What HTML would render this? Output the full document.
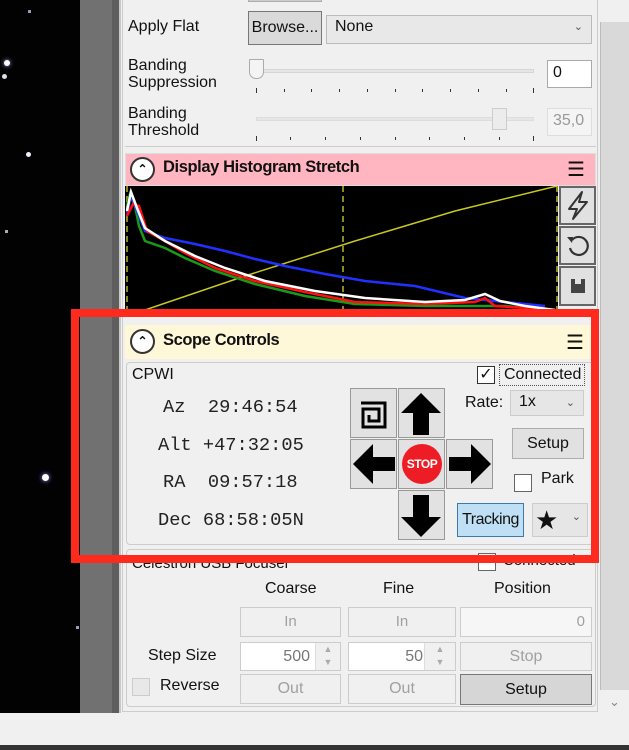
<!DOCTYPE html>
<html><head><meta charset="utf-8"><style>
*{box-sizing:border-box;margin:0;padding:0}
body{width:629px;height:750px;overflow:hidden;background:#f0f0f0;position:relative;font-family:"Liberation Sans",sans-serif;font-size:15px;color:#111}
.a{position:absolute}
.btn{position:absolute;border:1px solid #adadad;background:#e1e1e1;text-align:center}
.dis{position:absolute;border:1px solid #ccc;background:#f0f0f0;color:#a0a0a0;text-align:center;font-size:15px}
.mono{font-family:"Liberation Mono",monospace;font-size:18.7px;color:#222;white-space:pre}
.cell{position:absolute;width:47px;height:50px;background:#e2e2e2;border:1px solid #999}
.chk{position:absolute;width:18px;height:18px;border:1px solid #333;background:#fff}
.tick{position:absolute;width:1px;height:5px;background:#333}
</style></head><body>
<div class="a" style="left:0;top:0;width:80px;height:713px;background:#030203"></div>
<div class="a" style="left:4px;top:60px;width:6px;height:6px;border-radius:50%;background:#fff;box-shadow:0 0 4px #aaf"></div>
<div class="a" style="left:2px;top:74px;width:5px;height:5px;border-radius:50%;background:#dde"></div>
<div class="a" style="left:26px;top:152px;width:5px;height:5px;border-radius:50%;background:#eef"></div>
<div class="a" style="left:42px;top:474px;width:7px;height:7px;border-radius:50%;background:#fff;box-shadow:0 0 5px #99f"></div>
<div class="a" style="left:28px;top:10px;width:3px;height:3px;background:#99b"></div>
<div class="a" style="left:5px;top:230px;width:3px;height:3px;background:#aab"></div>
<div class="a" style="left:76px;top:626px;width:3px;height:3px;background:#99c"></div>
<div class="a" style="left:80px;top:0;width:32px;height:713px;background:#717171"></div>
<div class="a" style="left:112px;top:0;width:7px;height:713px;background:#5e5e5e"></div>
<div class="a" style="left:119px;top:0;width:2px;height:713px;background:#c8c8c8"></div>
<div class="a" style="left:600px;top:0;width:29px;height:713px;background:#d9d9d9;border-left:1px solid #bbb"></div>
<div class="a" style="left:600px;top:0;width:29px;height:22px;background:#f0f0f0"></div>
<div class="a" style="left:600px;top:690px;width:29px;height:23px;background:#f0f0f0;color:#888;text-align:center;font-size:13px;line-height:23px">&#8964;</div>
<div class="a" style="left:0;top:745px;width:629px;height:5px;background:#333"></div>
<div class="a" style="left:122px;top:0;width:476px;height:712px;border:1px solid #ccc;border-top:none"></div>
<div class="btn" style="left:248px;top:-4px;width:74px;height:6px;background:#ccc"></div>
<div class="a" style="left:128px;top:18px;font-size:16px">Apply Flat</div>
<div class="btn" style="left:248px;top:11px;width:74px;height:34px;line-height:32px;background:#dadada;border-color:#777;font-size:16px">Browse...</div>
<div class="a" style="left:326px;top:15px;width:266px;height:29px;border:1px solid #bbb;background:#e8e8e8;padding:2px 8px;font-size:16px">None<span style="position:absolute;right:8px;top:4px;font-size:11px;color:#555">&#8964;</span></div>
<div class="a" style="left:128px;top:57px;line-height:17px;font-size:16px">Banding<br>Suppression</div>
<div class="a" style="left:258px;top:69px;width:276px;height:4px;background:#e6e6e6;border:1px solid #d6d6d6"></div>
<div class="a" style="left:249px;top:59px;width:15px;height:20px;background:#f4f4f4;border:1px solid #aaa;border-radius:1px 1px 7px 7px"></div>
<div class="a" style="left:547px;top:60px;width:45px;height:28px;background:#fff;border:1px solid #aaa;padding:3px 5px;font-size:16px">0</div>
<div class="a" style="left:128px;top:105px;line-height:17px;font-size:16px">Banding<br>Threshold</div>
<div class="a" style="left:256px;top:117px;width:278px;height:4px;background:#e6e6e6;border:1px solid #ddd"></div>
<div class="a" style="left:492px;top:108px;width:15px;height:22px;background:#ececec;border:1px solid #ccc"></div>
<div class="a" style="left:547px;top:108px;width:45px;height:28px;background:#f4f4f4;border:1px solid #ddd;padding:3px 5px;color:#999;font-size:16px">35,0</div>
<div class="tick" style="left:256px;top:88px"></div><div class="tick" style="left:284px;top:89px;height:3px"></div><div class="tick" style="left:311px;top:89px;height:3px"></div><div class="tick" style="left:339px;top:89px;height:3px"></div><div class="tick" style="left:367px;top:89px;height:3px"></div><div class="tick" style="left:395px;top:89px;height:3px"></div><div class="tick" style="left:422px;top:89px;height:3px"></div><div class="tick" style="left:450px;top:89px;height:3px"></div><div class="tick" style="left:478px;top:89px;height:3px"></div><div class="tick" style="left:506px;top:89px;height:3px"></div><div class="tick" style="left:533px;top:88px"></div>
<div class="tick" style="left:256px;top:136px"></div><div class="tick" style="left:290px;top:137px;height:3px"></div><div class="tick" style="left:325px;top:137px;height:3px"></div><div class="tick" style="left:360px;top:137px;height:3px"></div><div class="tick" style="left:395px;top:137px;height:3px"></div><div class="tick" style="left:429px;top:137px;height:3px"></div><div class="tick" style="left:464px;top:137px;height:3px"></div><div class="tick" style="left:499px;top:137px;height:3px"></div><div class="tick" style="left:533px;top:136px"></div>
<div class="a" style="left:125px;top:146px;width:471px;height:1px;background:#ccc"></div>
<div class="a" style="left:125px;top:153px;width:471px;height:33px;background:#ffb6c1;border:1px solid #ddd"></div>
<div class="a" style="left:130px;top:157px;width:25px;height:25px;border:2px solid #333;border-radius:50%;background:#fff;font-size:12px;text-align:center;line-height:20px;font-weight:bold">&#8963;</div>
<div class="a" style="left:163px;top:158px;font-weight:bold;font-size:16.5px;letter-spacing:-0.4px">Display Histogram Stretch</div>
<div class="a" style="left:567px;top:160px;font-size:20px;line-height:20px">&#9776;</div>
<svg class="a" style="left:125px;top:186px" width="433" height="124">
<rect width="433" height="124" fill="#000"/>
<g stroke="#8a8a20" stroke-width="2" stroke-dasharray="6,4"><line x1="2" y1="0" x2="2" y2="124"/><line x1="218" y1="0" x2="218" y2="124"/><line x1="432" y1="0" x2="432" y2="124"/></g>
<polyline fill="none" stroke="#c8c820" stroke-width="1.5" points="20,124 120,90 230,55 330,25 432,0"/>
<polyline fill="none" stroke="#1a9a1a" stroke-width="2.5" points="2,20 5,8 10,20 14,40 20,55 40,62 60,72 90,85 130,98 180,110 230,118 300,120 380,120 420,124"/>
<polyline fill="none" stroke="#2030ff" stroke-width="2.5" points="2,30 6,8 12,25 20,45 40,52 70,58 100,65 130,73 160,80 200,88 240,95 290,100 340,112 380,116 420,120"/>
<polyline fill="none" stroke="#ff1010" stroke-width="2.5" points="2,30 8,18 14,20 22,45 40,55 60,67 90,82 130,95 180,106 230,116 300,118 350,116 360,112 370,120 430,124"/>
<polyline fill="none" stroke="#fff" stroke-width="2.5" points="2,25 6,6 12,22 20,42 40,55 70,70 100,82 140,95 190,105 240,112 300,116 340,114 360,108 375,115 400,120 430,124"/>
</svg>
<div class="btn" style="left:559px;top:186px;width:37px;height:39px;border:2px solid #666"><svg width="33" height="35"><path d="M21 4L8 21H16L12 31L26 14H18L21 4Z" fill="none" stroke="#333" stroke-width="2" stroke-linejoin="round"/></svg></div>
<div class="btn" style="left:559px;top:226px;width:37px;height:39px;border:2px solid #666"><svg width="33" height="35"><path d="M11 12A9 9 0 1 1 9 20" fill="none" stroke="#333" stroke-width="2.2"/><path d="M6 9L12 9L11 15Z" fill="#333"/></svg></div>
<div class="btn" style="left:559px;top:266px;width:37px;height:40px;border:2px solid #666"><div style="position:absolute;left:10px;top:11px;width:14px;height:14px;background:#444"></div><div style="position:absolute;left:14px;top:11px;width:6px;height:5px;background:#e1e1e1"></div></div>
<div class="a" style="left:125px;top:325px;width:471px;height:34px;background:#fff8d8"></div>
<div class="a" style="left:130px;top:329px;width:25px;height:25px;border:2px solid #333;border-radius:50%;background:#fff;font-size:12px;text-align:center;line-height:20px;font-weight:bold">&#8963;</div>
<div class="a" style="left:163px;top:331px;font-weight:bold;font-size:16.5px;letter-spacing:-0.4px">Scope Controls</div>
<div class="a" style="left:566px;top:333px;font-size:20px;line-height:20px">&#9776;</div>
<div class="a" style="left:126px;top:362px;width:470px;height:183px;border:1px solid #ccc;border-radius:4px"></div>
<div class="a" style="left:132px;top:366px;font-size:16px">CPWI</div>
<div class="chk" style="left:477px;top:366px;font-size:16px;line-height:15px;text-align:center">&#10003;</div>
<div class="a" style="left:499px;top:364px;width:86px;height:22px;border:1px dotted #555;padding:1px 4px;font-size:16px">Connected</div>
<div class="a mono" style="left:163px;top:396px">Az  29:46:54</div>
<div class="a mono" style="left:158px;top:434px">Alt +47:32:05</div>
<div class="a mono" style="left:163px;top:471px">RA  09:57:18</div>
<div class="a mono" style="left:158px;top:509px">Dec 68:58:05N</div>
<div class="cell" style="left:350px;top:388px"><svg width="45" height="48"><path d="M10 14H34V38H12V20H28V32H18V26" fill="none" stroke="#000" stroke-width="3"/></svg></div>
<div class="cell" style="left:398px;top:388px"><svg width="45" height="48"><path d="M22 4L42 24H30V46H14V24H2Z" fill="#000"/></svg></div>
<div class="cell" style="left:350px;top:439px"><svg width="45" height="48"><path d="M2 24L22 4V17H44V31H22V44Z" fill="#000"/></svg></div>
<div class="cell" style="left:398px;top:439px"><div style="position:absolute;left:3px;top:4px;width:40px;height:40px;border-radius:50%;background:#ee1c25;color:#fff;font-weight:bold;font-size:12px;line-height:40px;text-align:center;letter-spacing:-0.5px">STOP</div></div>
<div class="cell" style="left:446px;top:439px"><svg width="45" height="48"><path d="M44 24L24 4V17H2V31H24V44Z" fill="#000"/></svg></div>
<div class="cell" style="left:398px;top:490px"><svg width="45" height="48"><path d="M22 46L42 26H30V4H14V26H2Z" fill="#000"/></svg></div>
<div class="a" style="left:465px;top:394px;font-size:16px">Rate:</div>
<div class="a" style="left:510px;top:390px;width:74px;height:26px;border:1px solid #ccc;background:#e6e6e6;padding:2px 8px;font-size:16px">1x<span style="position:absolute;right:8px;top:5px;font-size:11px;color:#555">&#8964;</span></div>
<div class="btn" style="left:512px;top:428px;width:72px;height:31px;line-height:29px;font-size:16px">Setup</div>
<div class="chk" style="left:514px;top:474px;border-color:#666"></div>
<div class="a" style="left:541px;top:470px;font-size:16px">Park</div>
<div class="btn" style="left:457px;top:503px;width:67px;height:34px;background:#bfe0f4;border-color:#3a7ab0;line-height:32px;letter-spacing:-0.5px;font-size:16px">Tracking</div>
<div class="btn" style="left:532px;top:503px;width:56px;height:34px;background:#e6e6e6;border-color:#ccc"><span style="position:absolute;left:2px;top:2px;font-size:26px;line-height:28px">&#9733;</span><span style="position:absolute;right:6px;top:6px;font-size:11px;color:#555">&#8964;</span></div>
<div class="a" style="left:126px;top:549px;width:470px;height:158px;border:1px solid #ccc;border-radius:4px"></div>
<div class="a" style="left:132px;top:555px">Celestron USB Focuser</div>
<div class="chk" style="left:478px;top:553px;border-color:#666"></div>
<div class="a" style="left:503px;top:552px">Connected</div>
<div class="a" style="left:265px;top:580px;font-size:16px">Coarse</div>
<div class="a" style="left:383px;top:580px;font-size:16px">Fine</div>
<div class="a" style="left:494px;top:580px;font-size:16px">Position</div>
<div class="dis" style="left:240px;top:607px;width:101px;height:30px;line-height:28px">In</div>
<div class="dis" style="left:348px;top:607px;width:108px;height:30px;line-height:28px">In</div>
<div class="dis" style="left:460px;top:607px;width:132px;height:30px;line-height:28px;text-align:right;padding-right:6px;background:#f6f6f6">0</div>
<div class="a" style="left:148px;top:647px;font-size:16px">Step Size</div>
<div class="a" style="left:240px;top:642px;width:101px;height:29px;border:1px solid #ccc;background:#fff;text-align:right;padding:5px 30px 0 0;color:#777;font-size:16px">500</div>
<div class="a" style="left:315px;top:643px;width:25px;height:27px;background:#f0f0f0;border-left:1px solid #ddd;color:#aaa;font-size:9px;text-align:center;line-height:13px">&#9650;<br>&#9660;</div>
<div class="a" style="left:348px;top:642px;width:108px;height:29px;border:1px solid #ccc;background:#fff;text-align:right;padding:5px 32px 0 0;color:#777;font-size:16px">50</div>
<div class="a" style="left:424px;top:643px;width:31px;height:27px;background:#f0f0f0;border-left:1px solid #ddd;color:#aaa;font-size:9px;text-align:center;line-height:13px">&#9650;<br>&#9660;</div>
<div class="dis" style="left:460px;top:642px;width:132px;height:29px;line-height:27px;font-size:16px">Stop</div>
<div class="a" style="left:132px;top:678px;width:18px;height:18px;border:1px solid #ccc;background:#e8e8e8"></div>
<div class="a" style="left:160px;top:677px;font-size:16px">Reverse</div>
<div class="dis" style="left:240px;top:674px;width:101px;height:30px;line-height:27px;font-size:16px">Out</div>
<div class="dis" style="left:348px;top:674px;width:108px;height:30px;line-height:27px;font-size:16px">Out</div>
<div class="btn" style="left:460px;top:674px;width:132px;height:31px;line-height:29px;background:#d6d6d6;border-color:#777;font-size:16px">Setup</div>
<div class="a" style="left:71px;top:309px;width:528px;height:254px;border:8px solid #fe2a1e"></div>
</body></html>
